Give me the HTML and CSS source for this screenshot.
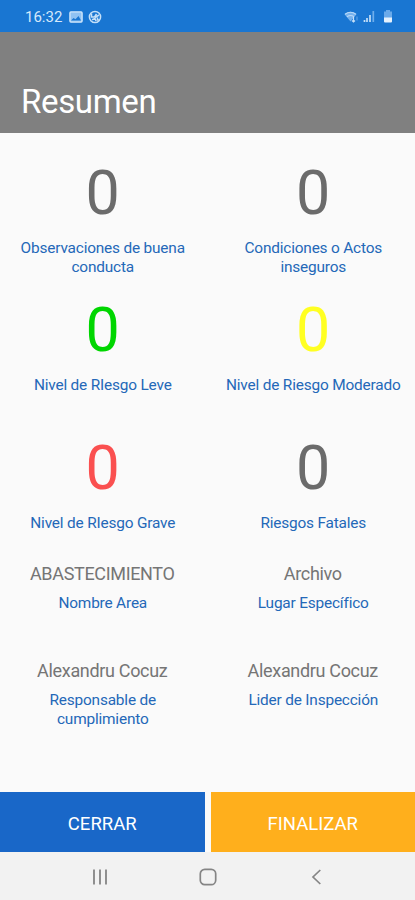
FILE: index.html
```
<!DOCTYPE html>
<html lang="es">
  <head>
    <meta charset="UTF-8" />
    <meta name="viewport" content="width=device-width, initial-scale=1.0" />
    <title>Resumen</title>
    <link rel="stylesheet" href="styles.css">
  </head>
  <body>
    <div class="screen">
      <div class="status-bar">
        <span class="time">16:32</span>
        <svg class="icon-image" width="14" height="12" viewBox="0 0 14 12">
          <rect x="0.9" y="0.9" width="12.2" height="10.2" rx="1" fill="#8fc2f3" stroke="#d5e9fb" stroke-width="1.3" />
          <path d="M2 9.500 4.500 7l2 1.200 3-3.200 2.500 4.500z" fill="#1976d2" />
        </svg>
        <svg class="icon-app" width="14" height="14" viewBox="0 0 14 14" fill="none" stroke="#c5e0f8" stroke-width="1.5">
          <circle cx="7" cy="7" r="5.600" />
          <path d="M3.500 3.500v3.500h3M6.500 7l2-3M7 7.500 11 5M4 9.800l3-1.300 1 2.500M9.500 7.500v2.500h2" />
        </svg>
        <div class="status-right">
          <svg width="15" height="14" viewBox="0 0 15 14">
            <path d="M0.500 4.200Q6.500-.5 12.500 4.200L6.500 11.500z" fill="#76b2ee" />
            <path d="M1 4.200Q6.500.3 12 4.200M3 6.800Q6.500 4.200 10 6.800" fill="none" stroke="#b9d9f7" stroke-width="1.200" />
            <path d="M9.500 7v5M8 10.500l1.500 1.500 1.500-1.500" fill="none" stroke="#c5e0f8" stroke-width="1.200" />
            <path d="M13 10.500v-4" stroke="#5fa4e8" stroke-width="1.100" />
          </svg>
          <svg width="12" height="13" viewBox="0 0 12 13">
            <path d="M1.500 10v2M4 8v4" stroke="#c5e0f8" stroke-width="1.700" />
            <path d="M7 5v7" stroke="#c5e0f8" stroke-width="1.700" />
            <path d="M10.300 1v11" stroke="#6eaeec" stroke-width="1.700" />
          </svg>
          <svg width="10" height="13" viewBox="0 0 10 13">
            <path d="M3 0h4v1.500h2V8H1V1.500h2z" fill="#6aaaea" />
            <path d="M1 7.500h8v4a1 1 0 0 1-1 1H2a1 1 0 0 1-1-1z" fill="#e6f2fd" />
          </svg>
        </div>
      </div>

      <header class="header">
        <h1>Resumen</h1>
      </header>

      <main class="content">
        <div class="grid counters">
          <div class="item">
            <div class="count">0</div>
            <div class="label">Observaciones de buena conducta</div>
          </div>
          <div class="item">
            <div class="count">0</div>
            <div class="label">Condiciones o Actos inseguros</div>
          </div>
          <div class="item">
            <div class="count green">0</div>
            <div class="label">Nivel de RIesgo Leve</div>
          </div>
          <div class="item">
            <div class="count yellow">0</div>
            <div class="label">Nivel de Riesgo Moderado</div>
          </div>
          <div class="item">
            <div class="count red">0</div>
            <div class="label">Nivel de RIesgo Grave</div>
          </div>
          <div class="item">
            <div class="count">0</div>
            <div class="label">Riesgos Fatales</div>
          </div>
        </div>

        <div class="grid details">
          <div class="item">
            <div class="value">ABASTECIMIENTO</div>
            <div class="label">Nombre Area</div>
          </div>
          <div class="item">
            <div class="value">Archivo</div>
            <div class="label">Lugar Específico</div>
          </div>
          <div class="item">
            <div class="value">Alexandru Cocuz</div>
            <div class="label">Responsable de cumplimiento</div>
          </div>
          <div class="item">
            <div class="value">Alexandru Cocuz</div>
            <div class="label">Lider de Inspección</div>
          </div>
        </div>
      </main>

      <div class="actions">
        <button type="button" class="btn btn-close">CERRAR</button>
        <button type="button" class="btn btn-finish">FINALIZAR</button>
      </div>

      <nav class="nav-bar">
        <svg width="16" height="18" viewBox="0 0 16 18">
          <path d="M2 1.500v15M8 1.500v15M14 1.500v15" stroke="#858585" stroke-width="1.800" />
        </svg>
        <svg width="18" height="18" viewBox="0 0 18 18">
          <rect x="1.300" y="1.300" width="15.400" height="15.400" rx="4.500" fill="none" stroke="#858585" stroke-width="1.700" />
        </svg>
        <svg width="16" height="18" viewBox="0 0 16 18">
          <path d="M12.300 2 5 9l7.300 7" fill="none" stroke="#858585" stroke-width="1.700" />
        </svg>
      </nav>
    </div>
  </body>
</html>
```

FILE: styles.css
```
body {
  margin: 0;
  font-family: Roboto, "Liberation Sans", sans-serif;
  background: #fafafa;
}

.screen {
  display: flex;
  flex-direction: column;
  height: 900px;
  overflow: hidden;
}

.status-bar {
  display: flex;
  align-items: center;
  box-sizing: border-box;
  height: 32px;
  padding: 1px 22px 0 25px;
  background: #1976d2;
  color: #d5e9fb;
}

.time {
  font-size: 15px;
  width: 38px;
}

.icon-image {
  margin-left: 6px;
}

.icon-app {
  margin-left: 5px;
}

.status-right {
  display: flex;
  align-items: center;
  gap: 4px;
  margin-left: auto;
}

.status-right svg:last-child {
  margin-left: 4px;
}

.header {
  box-sizing: border-box;
  height: 100.5px;
  padding: 50px 21px 0;
  background: #808080;
}

h1 {
  margin: 0;
  font-size: 33px;
  line-height: 40px;
  font-weight: 400;
  letter-spacing: -0.35px;
  color: #fff;
}

.content {
  flex: 1;
  padding-top: 24.5px;
}

.grid {
  display: grid;
  grid-template-columns: 1fr 1fr;
  column-gap: 6px;
  text-align: center;
}

.counters {
  grid-auto-rows: 137.4px;
}

.details {
  grid-auto-rows: 97px;
  margin-top: -6px;
}

.count {
  padding-left: 1px;
  font-size: 61px;
  line-height: 72px;
  margin-bottom: 10px;
  color: #6b6b6b;
}

.green {
  color: #00d600;
}

.yellow {
  color: #ffff22;
}

.red {
  color: #fa5050;
}

.label {
  padding: 0 12px 0 13px;
  font-size: 15.4px;
  line-height: 18.5px;
  letter-spacing: -0.18px;
  color: #2468b8;
}

.value {
  margin-bottom: 9px;
  font-size: 18px;
  line-height: 22px;
  letter-spacing: -0.33px;
  color: #757575;
}

.actions {
  display: flex;
  gap: 6px;
}

.btn {
  flex: 1;
  height: 60px;
  padding: 3px 0 0;
  border: none;
  font-family: inherit;
  font-size: 18.5px;
  color: #fff;
}

.btn-close {
  background: #1967c8;
}

.btn-finish {
  background: #ffaf1c;
}

.nav-bar {
  display: flex;
  align-items: center;
  box-sizing: border-box;
  gap: 91px;
  height: 48px;
  padding: 2px 0 0 92px;
  background: #f2f2f2;
}
```
